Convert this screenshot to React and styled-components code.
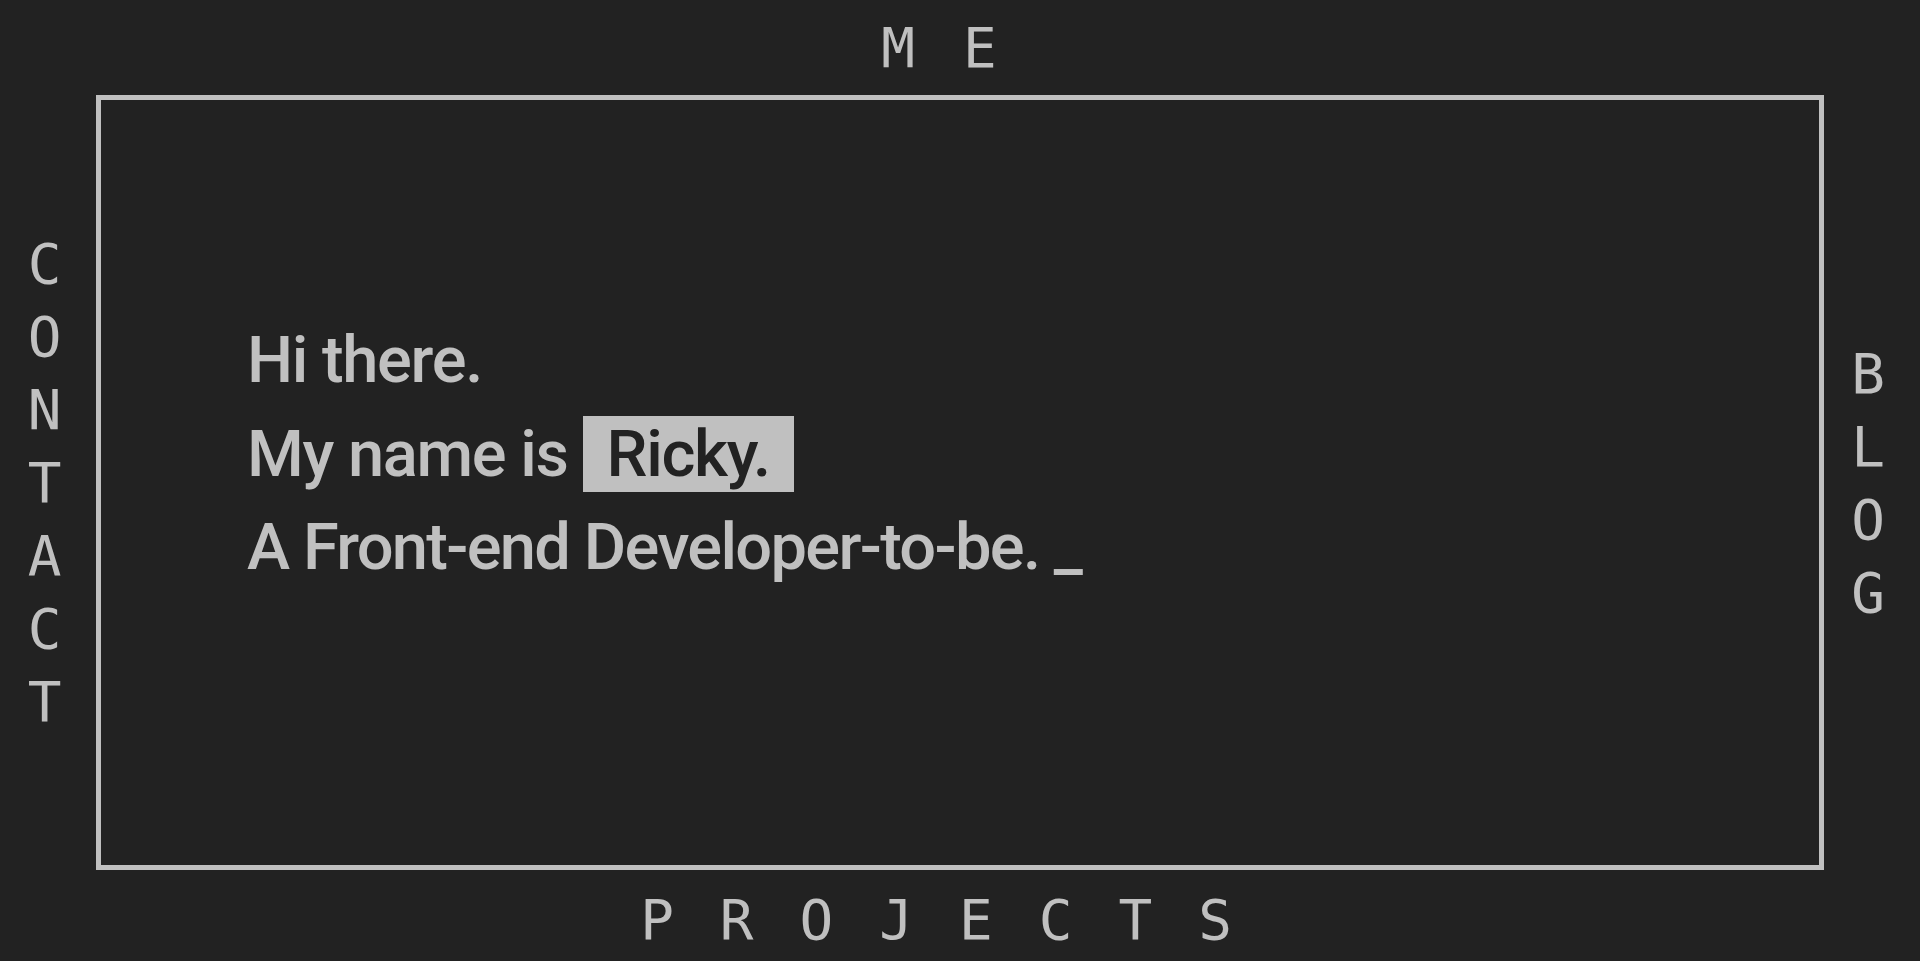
import React from "react";
import styled, { createGlobalStyle } from "styled-components";

const GlobalStyle = createGlobalStyle`
  html, body {
    margin: 0;
    padding: 0;
    background: #222222;
  }
  body {
    font-family: "DejaVu Sans Mono", monospace;
    color: #c0c0c0;
  }
`;

const Page = styled.div`
  width: 100vw;
  height: 100vh;
  display: grid;
  grid-template-columns: 96px 1fr 96px;
  grid-template-rows: 95px 1fr 91px;
  overflow: hidden;
`;

const NavRow = styled.nav`
  grid-column: 1 / 4;
  display: flex;
  justify-content: center;
  align-items: flex-start;
  padding-top: ${(p) => p.$top}px;
  padding-left: ${(p) => (p.$offset > 0 ? p.$offset : 0)}px;
  padding-right: ${(p) => (p.$offset < 0 ? -p.$offset : 0)}px;
  box-sizing: border-box;
`;

const NavWord = styled.a`
  font-family: "DejaVu Sans Mono", monospace;
  font-size: 56px;
  line-height: 56px;
  letter-spacing: ${(p) => p.$spacing}px;
  color: #c0c0c0;
  text-decoration: none;
  text-align: center;
`;

const SideNav = styled.nav`
  display: flex;
  justify-content: center;
  align-items: center;
  padding-right: ${(p) => p.$shift || 0}px;
`;

const SideWord = styled.a`
  font-family: "DejaVu Sans Mono", monospace;
  font-size: 56px;
  line-height: 73px;
  width: 1ch;
  word-break: break-all;
  text-align: center;
  color: #c0c0c0;
  text-decoration: none;
`;

const Frame = styled.main`
  border: 5px solid #c0c0c0;
  padding: 214px 0 0 146px;
  box-sizing: border-box;
`;

const Intro = styled.div`
  font-family: Roboto, "Liberation Sans", sans-serif;
  font-weight: 500;
  font-size: 65px;
  line-height: 93.5px;
  color: #c0c0c0;
`;

const Line = styled.p`
  margin: 0;
  white-space: nowrap;
  letter-spacing: ${(p) => p.$tight || -0.02}em;
`;

const Name = styled.span`
  background: #c0c0c0;
  color: #222222;
  padding: 0 24px;
`;

export default function App() {
  return (
    <>
      <GlobalStyle />
      <Page>
        <NavRow $top={19.5} $offset={6}>
          <NavWord href="#me" $spacing={48}>ME</NavWord>
        </NavRow>
        <SideNav $shift={7}>
          <SideWord href="#contact">CONTACT</SideWord>
        </SideNav>
        <Frame>
          <Intro>
            <Line>Hi there.</Line>
            <Line>
              My name is <Name>Ricky.</Name>
            </Line>
            <Line $tight={-0.026}>A Front-end Developer-to-be. _</Line>
          </Intro>
        </Frame>
        <SideNav $shift={8}>
          <SideWord href="#blog">BLOG</SideWord>
        </SideNav>
        <NavRow $top={21.5} $offset={-2}>
          <NavWord href="#projects" $spacing={46}>PROJECTS</NavWord>
        </NavRow>
      </Page>
    </>
  );
}
